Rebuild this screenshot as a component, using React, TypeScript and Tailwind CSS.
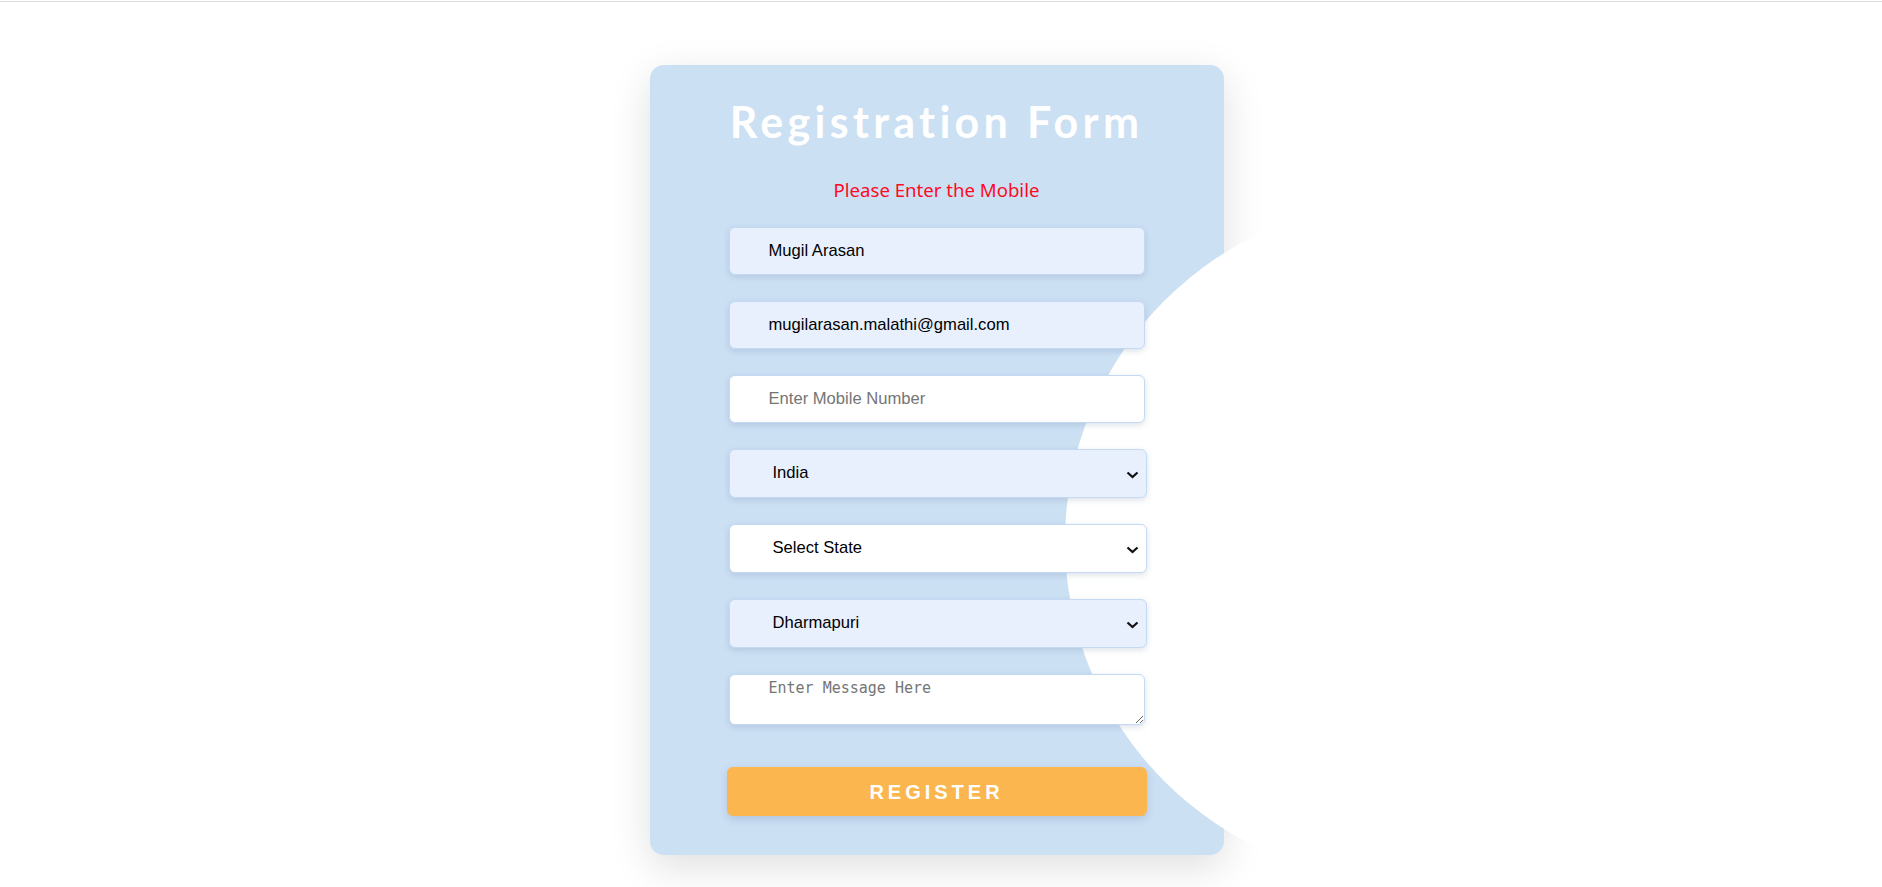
import { useState } from "react";

const fieldBase =
  "w-full rounded-md border border-[#c4daf4] pl-[39px] pr-3 text-[16.6px] text-black font-['Liberation_Sans',Arial,sans-serif] shadow-[0_2px_6px_rgba(60,90,130,0.18)] outline-none";

const Chevron = () => (
  <svg
    className="pointer-events-none absolute right-[8px] top-[22px]"
    width="13"
    height="8"
    viewBox="0 0 13 8"
  >
    <polyline
      points="1.5,1.5 6.5,6 11.5,1.5"
      fill="none"
      stroke="#111"
      strokeWidth="2.3"
    />
  </svg>
);

type SelectProps = {
  value: string;
  onChange: (v: string) => void;
  bg: string;
  options: { value: string; label: string }[];
};

const SelectBox = ({ value, onChange, bg, options }: SelectProps) => (
  <div className="relative w-[418px]">
    <select
      className={`${fieldBase} ${bg} h-[49px] appearance-none pl-[43px]`}
      value={value}
      onChange={(e) => onChange(e.target.value)}
    >
      {options.map((o) => (
        <option key={o.label} value={o.value}>
          {o.label}
        </option>
      ))}
    </select>
    <Chevron />
  </div>
);

const App = () => {
  const [name, setName] = useState("Mugil Arasan");
  const [email, setEmail] = useState("mugilarasan.malathi@gmail.com");
  const [mobile, setMobile] = useState("");
  const [country, setCountry] = useState("India");
  const [state, setState] = useState("");
  const [district, setDistrict] = useState("Dharmapuri");
  const [message, setMessage] = useState("");

  return (
    <div className="min-h-[887px] bg-white overflow-hidden">
      <div className="mt-px h-px bg-[#dedede]" />

      <div className="flex justify-center pr-[9px] pt-[63px]">
        {/* card */}
        <div className="relative w-[574px] rounded-[14px] bg-[#cce0f4] px-[79px] pt-[33px] pb-[39px] shadow-[0_12px_40px_rgba(0,0,0,0.13)]">
          {/* white circle decoration */}
          <div className="absolute left-[415px] top-[136px] h-[680px] w-[680px] rounded-full bg-white" />

          <form
            className="relative z-10 flex flex-col"
            onSubmit={(e) => e.preventDefault()}
          >
            <h1 className="text-center text-[43px] leading-[48px] font-bold tracking-[4.3px] text-white font-['Lato',sans-serif]">
              Registration Form
            </h1>
            <p className="mt-[31px] text-center text-[18.6px] leading-[26px] text-[#ff0a1e] font-['Noto_Sans',sans-serif]">
              Please Enter the Mobile
            </p>

            <div className="mt-[24px] flex flex-col gap-[26px]">
              <input
                className={`${fieldBase} h-[48px] bg-[#e8f0fe]`}
                value={name}
                onChange={(e) => setName(e.target.value)}
              />
              <input
                className={`${fieldBase} h-[48px] bg-[#e8f0fe]`}
                value={email}
                onChange={(e) => setEmail(e.target.value)}
              />
              <input
                className={`${fieldBase} h-[48px] bg-white placeholder:text-[#757575]`}
                placeholder="Enter Mobile Number"
                value={mobile}
                onChange={(e) => setMobile(e.target.value)}
              />
              <SelectBox
                value={country}
                onChange={setCountry}
                bg="bg-[#e8f0fe]"
                options={[{ value: "India", label: "India" }]}
              />
              <SelectBox
                value={state}
                onChange={setState}
                bg="bg-white"
                options={[
                  { value: "", label: "Select State" },
                  { value: "Tamil Nadu", label: "Tamil Nadu" },
                ]}
              />
              <SelectBox
                value={district}
                onChange={setDistrict}
                bg="bg-[#e8f0fe]"
                options={[{ value: "Dharmapuri", label: "Dharmapuri" }]}
              />
              <textarea
                className="h-[51px] w-full rounded-md border border-[#c4daf4] bg-white pl-[39px] pr-3 pt-[3px] text-[15px] leading-[20px] font-['DejaVu_Sans_Mono',monospace] text-black shadow-[0_2px_6px_rgba(60,90,130,0.18)] outline-none placeholder:text-[#757575]"
                placeholder="Enter Message Here"
                value={message}
                onChange={(e) => setMessage(e.target.value)}
              />
            </div>

            <button
              type="submit"
              className="mt-[42px] -mx-[2px] h-[49px] rounded-md bg-[#fbb650] text-[20px] font-bold tracking-[4px] text-white font-['Liberation_Sans',Arial,sans-serif] shadow-[0_3px_8px_rgba(60,90,130,0.2)]"
            >
              REGISTER
            </button>
          </form>
        </div>
      </div>
    </div>
  );
};

export default App;
